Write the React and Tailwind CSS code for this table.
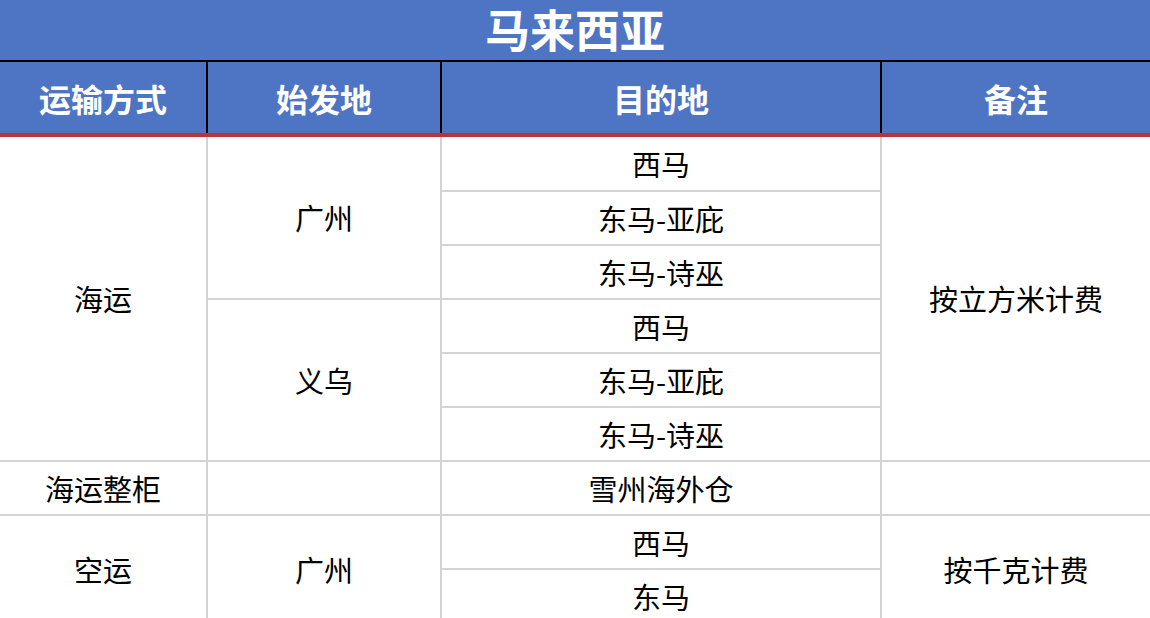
import React from "react";

const font = { fontFamily: '"Noto Sans CJK SC", "Noto Sans", sans-serif' };

function Cell({ children, className = "" }) {
  return (
    <div className={`bg-white flex items-center justify-center text-[29px] leading-none text-black ${className}`}>
      {children}
    </div>
  );
}

export default function App() {
  return (
    <div className="w-[1150px] h-[618px] overflow-hidden bg-white" style={font}>
      <div className="h-[60px] bg-[#4e74c4] flex items-center justify-center text-white font-bold text-[45px] leading-none pb-[4px]">
        马来西亚
      </div>
      <div className="grid grid-cols-[206px_232px_438px_1fr] gap-x-[2px] bg-black pt-[2px]">
        {["运输方式", "始发地", "目的地", "备注"].map((t) => (
          <div key={t} className="h-[71px] bg-[#4e74c4] flex items-center justify-center text-white font-bold text-[32px] leading-none">
            {t}
          </div>
        ))}
      </div>
      <div className="h-[4px] bg-[#bf3038]" />
      <div className="grid grid-cols-[206px_232px_438px_1fr] grid-rows-[53px_repeat(8,52px)] gap-[2px] bg-[#d4d4d4]">
        <Cell className="col-start-1 row-start-1 row-span-6">海运</Cell>
        <Cell className="col-start-1 row-start-7">海运整柜</Cell>
        <Cell className="col-start-1 row-start-8 row-span-2">空运</Cell>

        <Cell className="col-start-2 row-start-1 row-span-3">广州</Cell>
        <Cell className="col-start-2 row-start-4 row-span-3">义乌</Cell>
        <Cell className="col-start-2 row-start-7"></Cell>
        <Cell className="col-start-2 row-start-8 row-span-2">广州</Cell>

        <Cell className="col-start-3 row-start-1">西马</Cell>
        <Cell className="col-start-3 row-start-2">东马-亚庇</Cell>
        <Cell className="col-start-3 row-start-3">东马-诗巫</Cell>
        <Cell className="col-start-3 row-start-4">西马</Cell>
        <Cell className="col-start-3 row-start-5">东马-亚庇</Cell>
        <Cell className="col-start-3 row-start-6">东马-诗巫</Cell>
        <Cell className="col-start-3 row-start-7">雪州海外仓</Cell>
        <Cell className="col-start-3 row-start-8">西马</Cell>
        <Cell className="col-start-3 row-start-9">东马</Cell>

        <Cell className="col-start-4 row-start-1 row-span-6">按立方米计费</Cell>
        <Cell className="col-start-4 row-start-7"></Cell>
        <Cell className="col-start-4 row-start-8 row-span-2">按千克计费</Cell>
      </div>
    </div>
  );
}
